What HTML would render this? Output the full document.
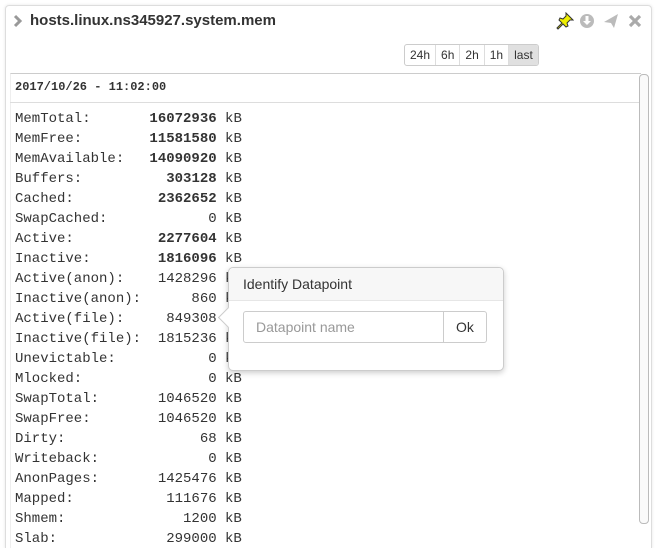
<!DOCTYPE html>
<html style="height:548px;overflow:hidden"><head><style>
body{margin:0;width:655px;height:548px;background:#fff;overflow:hidden;font-family:"Liberation Sans",sans-serif;position:relative}
.panel{position:absolute;left:5px;top:5px;width:645px;height:543px;border:1px solid #ddd;border-bottom:none;border-radius:4px 4px 0 0;box-shadow:0 0 3px rgba(0,0,0,.1)}
.title{position:absolute;left:30px;top:12px;font-size:15px;font-weight:bold;color:#333}
.btns{position:absolute;left:404px;top:44px;display:flex;border:1px solid #ccc;border-radius:3px;overflow:hidden}
.btns span{font-size:12px;color:#333;padding:3px 5px;border-left:1px solid #ddd;line-height:14px}
.btns span:first-child{border-left:none}
.btns .act{background:#e0e0e0}
.box{position:absolute;left:10px;top:73px;width:630px;height:475px;border-top:1px solid #ccc;border-left:1px solid #eee}
.date{position:absolute;left:15px;top:80px;font:bold 12px "Liberation Mono",monospace;color:#333}
.hr{position:absolute;left:10px;top:102px;width:630px;border-top:1px solid #ddd}
.sb{position:absolute;left:639px;top:74px;width:8px;height:448px;border:1px solid #bbb;border-radius:4px;background:#fafafa}
pre{position:absolute;left:15px;top:109px;margin:0;font:14px/20px "Liberation Mono",monospace;color:#333}
.pop{position:absolute;left:228px;top:267px;width:274px;height:102px;background:#fff;border:1px solid #ccc;border-radius:5px;box-shadow:0 2px 6px rgba(0,0,0,.2)}
.ph{height:32px;background:#f7f7f7;border-bottom:1px solid #e6e6e6;font-size:14px;color:#333;line-height:32px;padding-left:14px;border-radius:5px 5px 0 0}
.arrow{position:absolute;left:-8px;top:42px;width:14px;height:14px;background:#fff;border-left:1px solid #ccc;border-bottom:1px solid #ccc;transform:rotate(45deg)}
.inp{position:absolute;left:14px;top:43px;width:201px;height:32px;border:1px solid #ccc;border-radius:3px 0 0 3px;font-size:14px;color:#999;line-height:31px;padding-left:12px;box-sizing:border-box}
.ok{position:absolute;left:214px;top:43px;width:44px;height:32px;border:1px solid #ccc;border-radius:0 3px 3px 0;font-size:14px;color:#333;line-height:31px;text-align:center;box-sizing:border-box}
</style></head><body>
<div class="panel"></div>
<svg style="position:absolute;left:13px;top:14px" width="10" height="14"><path d="M2 2L7 7 2 12" fill="none" stroke="#999" stroke-width="3"/></svg>
<div class="title">hosts.linux.ns345927.system.mem</div>
<svg style="position:absolute;left:556px;top:12px" width="18" height="18" viewBox="0 0 18 18"><path d="M10 1l7 7-3 0-3 3 1 3-2 1-3-3-5 5-1-1 5-5-3-3 1-2 3 1 3-3z" fill="#ee0" stroke="#333" stroke-width="1"/></svg>
<svg style="position:absolute;left:579px;top:13px" width="16" height="16"><circle cx="8" cy="8" r="7" fill="#bbb"/><path d="M6.5 3h3v5h2.5l-4 4-4-4h2.5z" fill="#fff"/></svg>
<svg style="position:absolute;left:603px;top:13px" width="16" height="16"><path d="M1 9L15 1 11 15 8 10z" fill="#bbb"/></svg>
<svg style="position:absolute;left:628px;top:14px" width="14" height="14"><path d="M2 2L12 12M12 2L2 12" stroke="#aaa" stroke-width="3.2"/></svg>
<div class="btns"><span>24h</span><span>6h</span><span>2h</span><span>1h</span><span class="act">last</span></div>
<div class="box"></div>
<div class="date">2017/10/26 - 11:02:00</div>
<div class="hr"></div>
<div class="sb"></div>
<pre>MemTotal:       <b>16072936</b> kB
MemFree:        <b>11581580</b> kB
MemAvailable:   <b>14090920</b> kB
Buffers:          <b>303128</b> kB
Cached:          <b>2362652</b> kB
SwapCached:            0 kB
Active:          <b>2277604</b> kB
Inactive:        <b>1816096</b> kB
Active(anon):    1428296 kB
Inactive(anon):      860 kB
Active(file):     849308 kB
Inactive(file):  1815236 kB
Unevictable:           0 kB
Mlocked:               0 kB
SwapTotal:       1046520 kB
SwapFree:        1046520 kB
Dirty:                68 kB
Writeback:             0 kB
AnonPages:       1425476 kB
Mapped:           111676 kB
Shmem:              1200 kB
Slab:             299000 kB</pre>
<div class="pop"><div class="arrow"></div><div class="ph" style="position:relative">Identify Datapoint</div><div class="inp">Datapoint name</div><div class="ok">Ok</div></div>
</body></html>
